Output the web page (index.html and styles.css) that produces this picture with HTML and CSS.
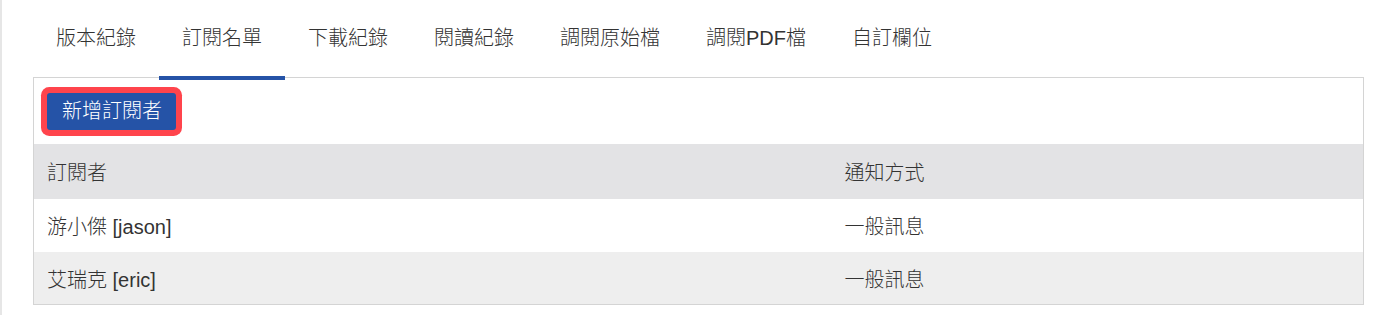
FILE: index.html
```html
<!DOCTYPE html>
<html lang="zh-Hant">
<head>
<meta charset="utf-8">
<title>訂閱名單</title>
<link rel="stylesheet" href="styles.css">
</head>
<body>
<div class="page">
  <nav class="tabs">
    <a class="tab">版本紀錄</a>
    <a class="tab active">訂閱名單</a>
    <a class="tab">下載紀錄</a>
    <a class="tab">閱讀紀錄</a>
    <a class="tab">調閱原始檔</a>
    <a class="tab">調閱PDF檔</a>
    <a class="tab">自訂欄位</a>
  </nav>
  <section class="panel">
    <div class="toolbar">
      <button class="btn-primary">新增訂閱者</button>
    </div>
    <table class="grid">
      <thead>
        <tr><th class="col-name">訂閱者</th><th>通知方式</th></tr>
      </thead>
      <tbody>
        <tr><td>游小傑 [jason]</td><td>一般訊息</td></tr>
        <tr class="alt"><td>艾瑞克 [eric]</td><td>一般訊息</td></tr>
      </tbody>
    </table>
  </section>
</div>
</body>
</html>
```
FILE: styles.css
```css
html, body {
  margin: 0;
  padding: 0;
  background: #ffffff;
}
body {
  font-family: "Liberation Sans", "Noto Sans CJK TC", sans-serif;
  font-weight: 300;
  color: #333333;
  font-size: 20px;
}
.page {
  border-left: 2px solid #e6e6e6;
  padding-left: 31px;
  width: 1331px;
  min-height: 315px;
  box-sizing: content-box;
}
.tabs {
  display: flex;
  border-bottom: 1px solid #d4d4d4;
  height: 77px;
}
.tab {
  display: block;
  padding: 24px 23px 24px;
  line-height: 28px;
  border-bottom: 4px solid transparent;
  margin-bottom: -3px;
  color: #333333;
  white-space: nowrap;
  cursor: pointer;
}
.tab.active {
  border-bottom-color: #2553a7;
}
.panel {
  border: 1px solid #d4d4d4;
  border-top: none;
}
.toolbar {
  padding: 15px 13px 14px;
}
.btn-primary {
  font-family: inherit;
  font-weight: inherit;
  font-size: 20px;
  line-height: 37px;
  height: 37px;
  padding: 0 14px 0 15px;
  border: none;
  border-radius: 3px;
  background: #2553a7;
  color: #ffffff;
  box-shadow: 0 0 0 6px #ff444c;
  display: block;
  cursor: pointer;
}
.grid {
  width: 100%;
  border-collapse: collapse;
}
.grid th, .grid td {
  text-align: left;
  font-weight: inherit;
  padding: 0 13px;
  color: #333333;
}
.grid th {
  background: #e3e3e5;
  height: 55px;
}
.grid th.col-name {
  width: 60%;
}
.grid td {
  height: 53px;
  background: #ffffff;
}
.grid tr.alt td {
  background: #eeeeee;
  height: 52px;
}
```
